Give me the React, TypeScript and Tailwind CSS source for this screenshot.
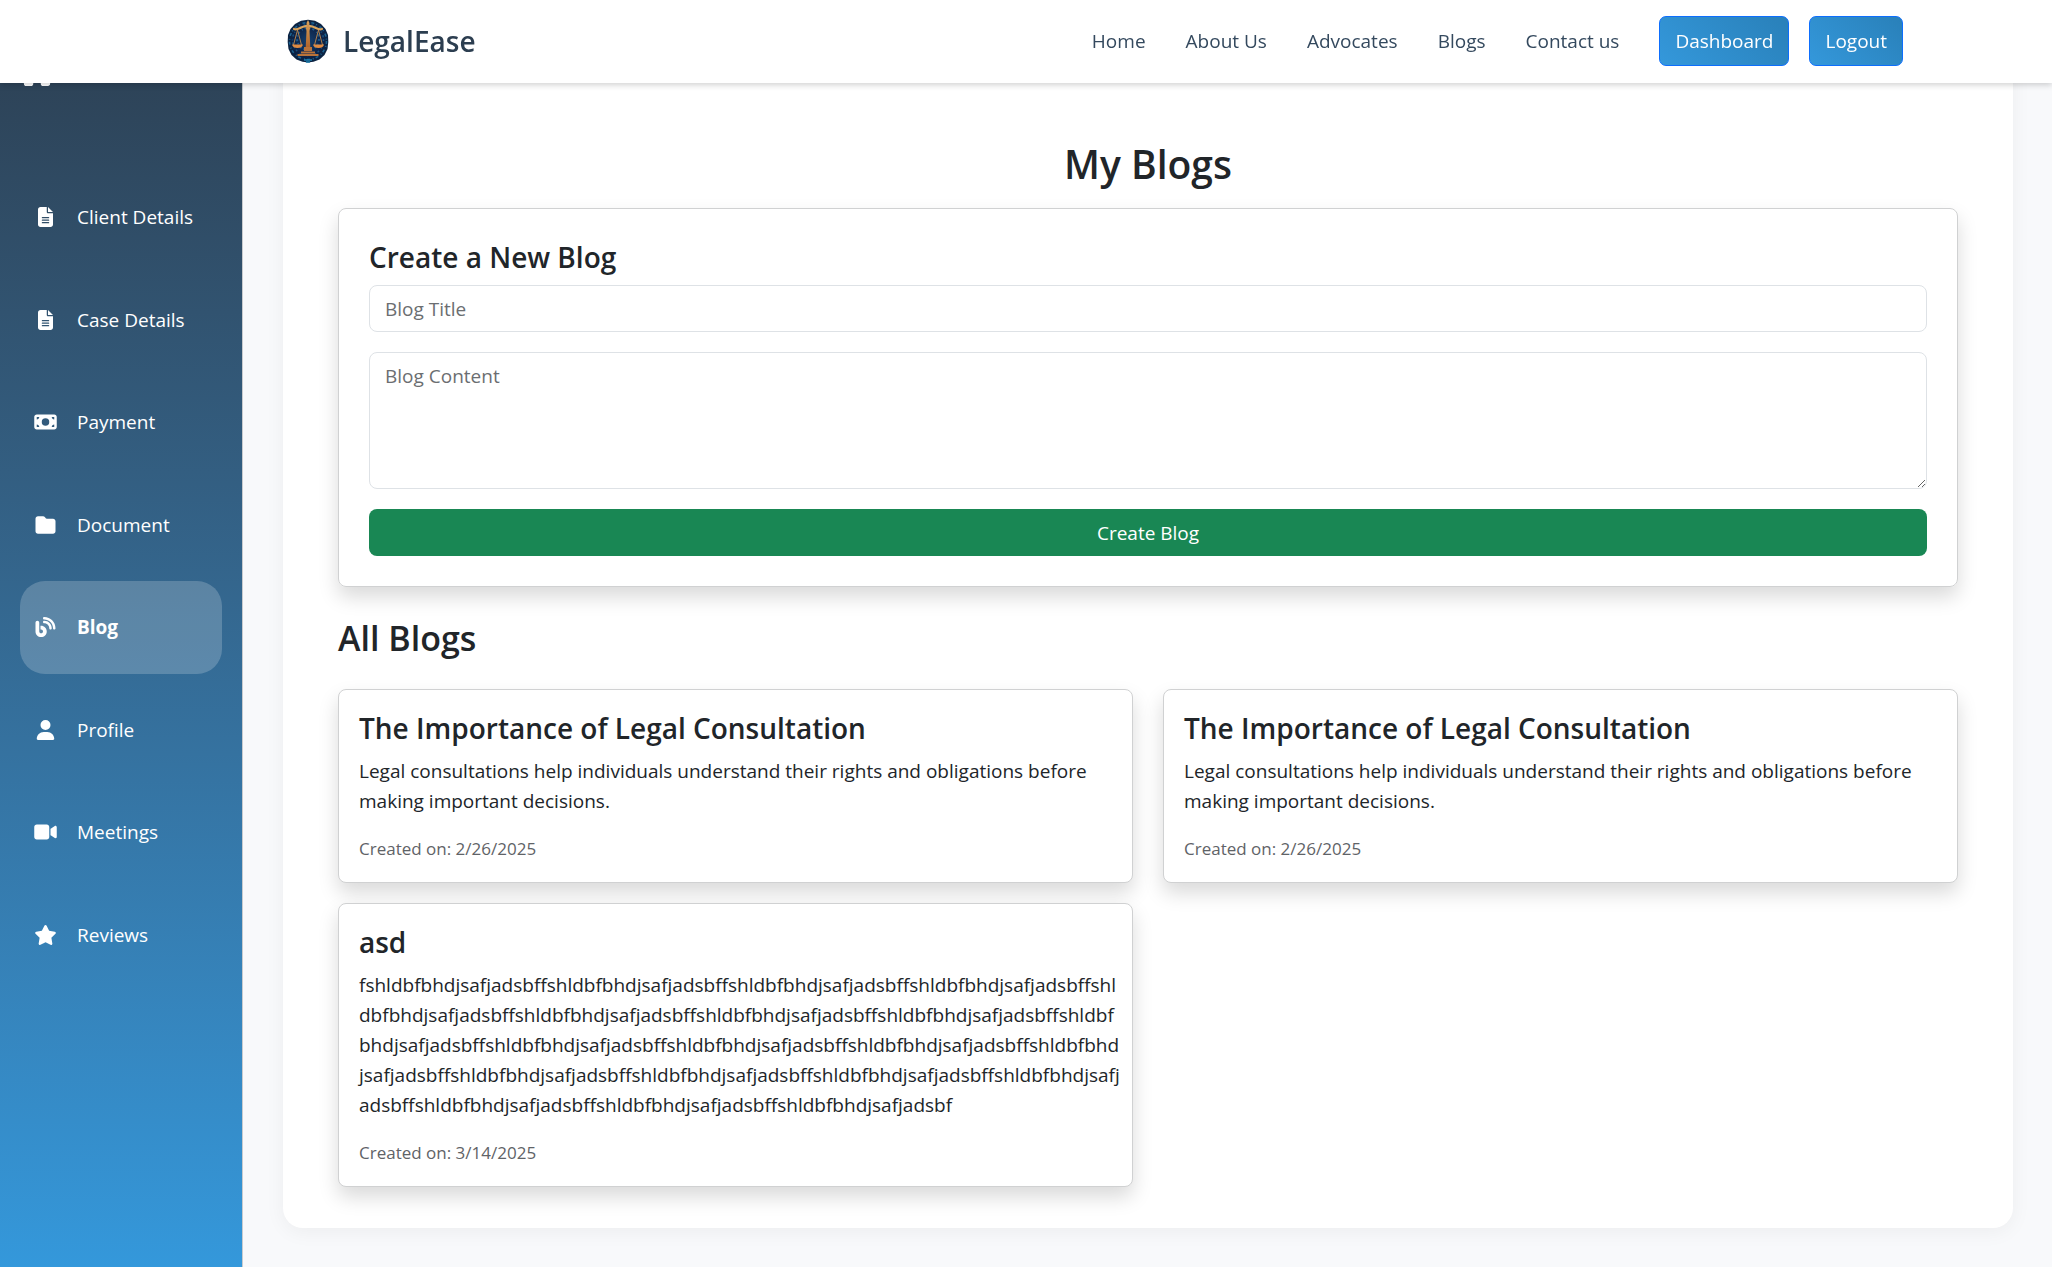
import type { ReactNode } from "react";
import {
  FaBlog,
  FaFileLines,
  FaFolder,
  FaHouse,
  FaMoneyBill,
  FaStar,
  FaUser,
  FaVideo,
} from "react-icons/fa6";

const navLinks = ["Home", "About Us", "Advocates", "Blogs", "Contact us"];

const menu = [
  { label: "Client Details", Icon: FaFileLines },
  { label: "Case Details", Icon: FaFileLines },
  { label: "Payment", Icon: FaMoneyBill },
  { label: "Document", Icon: FaFolder },
  { label: "Blog", Icon: FaBlog, active: true },
  { label: "Profile", Icon: FaUser },
  { label: "Meetings", Icon: FaVideo },
  { label: "Reviews", Icon: FaStar },
];

const consultation = {
  title: "The Importance of Legal Consultation",
  lines: [
    "Legal consultations help individuals understand their rights and obligations before",
    "making important decisions.",
  ],
  date: "2/26/2025",
};

const blogs = [
  consultation,
  consultation,
  {
    title: "asd",
    lines: [
      "fshldbfbhdjsafjadsbffshldbfbhdjsafjadsbffshldbfbhdjsafjadsbffshldbfbhdjsafjadsbffshl",
      "dbfbhdjsafjadsbffshldbfbhdjsafjadsbffshldbfbhdjsafjadsbffshldbfbhdjsafjadsbffshldbf",
      "bhdjsafjadsbffshldbfbhdjsafjadsbffshldbfbhdjsafjadsbffshldbfbhdjsafjadsbffshldbfbhd",
      "jsafjadsbffshldbfbhdjsafjadsbffshldbfbhdjsafjadsbffshldbfbhdjsafjadsbffshldbfbhdjsafj",
      "adsbffshldbfbhdjsafjadsbffshldbfbhdjsafjadsbffshldbfbhdjsafjadsbf",
    ],
    date: "3/14/2025",
  },
];

function Logo() {
  return (
    <svg viewBox="0 0 42 44" className="h-11 w-[42px]" aria-hidden="true">
      <defs>
        <radialGradient id="disc">
          <stop offset="0" stopColor="#14406f" />
          <stop offset="0.7" stopColor="#0e2246" />
          <stop offset="1" stopColor="#0b2342" />
        </radialGradient>
        <linearGradient id="gold" x1="0" y1="0" x2="0" y2="1">
          <stop offset="0" stopColor="#d9a25a" />
          <stop offset="1" stopColor="#b0642b" />
        </linearGradient>
      </defs>
      <path
        d="M21 .8 28 1.8 34 5l4.500 5L41 16l.3 7-.8 7-3 6-5 4.500-6 2.200L21 43.500l-5.500-.8-6-2.200-5-4.500-3-6L.7 23 1 16l2.500-6L8 5l6-3.200z"
        fill="url(#disc)"
      />
      <circle cx="21" cy="22" r="18.500" fill="none" stroke="#1b6291" strokeWidth="1.600" strokeDasharray="3 2 1 3" />
      <circle cx="21" cy="21" r="15.500" fill="none" stroke="#185180" strokeWidth="1.500" strokeDasharray="1 3 2 2" />
      <circle cx="21" cy="20" r="11" fill="none" stroke="#1c5a8c" strokeWidth="2" strokeDasharray="2 3 1 2" />
      <path d="M17 41h8M19 43h4" stroke="#1e7fae" strokeWidth="1.500" />
      <path
        d="M7 10c3.500 1.500 6.500-2 10-2.500 1.500-.2 3-.8 4-.8s2.500.6 4 .8c3.500.5 6.500 4 10 2.500"
        fill="none"
        stroke="#d9a35c"
        strokeWidth="2.200"
        strokeLinecap="round"
      />
      <path d="M10.500 11 6.500 26M10.500 11l4 15M31.500 11l-4 15M31.500 11l4 15" stroke="#c08a4e" strokeWidth=".9" />
      <path d="M21 1l1.500 3-.4 3 1 2-.6 3 .8 16.500h-4.600l.8-16.500-.6-3 1-2-.4-3z" fill="url(#gold)" />
      <path
        d="M5 25.500h11c-.5 2.500-2.500 3.500-5.500 3.500S5.500 28 5 25.500zM26 25.500h11c-.5 2.500-2.500 3.500-5.500 3.500S26.500 28 26 25.500z"
        fill="#e08a42"
      />
      <path d="M17 28h8v4h-8zM14 32.500h14v2H14zM10.500 35h21v2h-21z" fill="#b9733a" />
    </svg>
  );
}

function NavButton({ children }: { children: ReactNode }) {
  return (
    <button className="h-[50px] rounded-[7px] border border-[#0d6efd] bg-linear-[45deg,#3498db,#2980b9] px-[15px] text-[19px] font-medium text-white">
      {children}
    </button>
  );
}

export default function App() {
  return (
    <div className="flex min-h-screen bg-[#f8f9fb] font-['Open_Sans','Noto_Sans',sans-serif] text-[19px] leading-[30px] text-[#212529]">
      <header className="fixed inset-x-0 top-0 z-10 flex h-[83px] items-center justify-between bg-white pr-[149px] pb-0.5 pl-[287px] shadow-[0_2px_6px_rgba(0,0,0,0.18)]">
        <a href="#" className="flex items-center gap-3.5 text-[28px] font-semibold text-[#2c3e50]">
          <Logo />
          LegalEase
        </a>
        <div className="flex items-center gap-10">
          <nav className="flex gap-10 text-[#34495e]">
            {navLinks.map((label) => (
              <a key={label} href="#">
                {label}
              </a>
            ))}
          </nav>
          <div className="flex gap-5">
            <NavButton>Dashboard</NavButton>
            <NavButton>Logout</NavButton>
          </div>
        </div>
      </header>

      <aside className="w-[243px] shrink-0 border-r border-[#c8cbce] bg-linear-to-b from-[#2c3e50] to-[#3498db] px-5 pt-14 text-white">
        <button aria-label="Toggle menu" className="block">
          <FaHouse className="h-[30px] w-[34px]" />
        </button>
        <nav className="mt-[85px] grid h-[810px] auto-rows-fr gap-2.5">
          {menu.map(({ label, Icon, active }) => (
            <a
              key={label}
              href="#"
              className={
                active
                  ? "flex items-center gap-5 rounded-[25px] bg-white/20 px-3.5 font-bold"
                  : "flex items-center gap-5 rounded-[25px] px-3.5 font-medium"
              }
            >
              <Icon className="h-5 w-[23px] shrink-0" />
              {label}
            </a>
          ))}
        </nav>
      </aside>

      <main className="min-w-0 flex-1 pr-[39px] pb-[39px] pl-10">
        <div className="rounded-b-[20px] bg-white px-[55px] pt-[140px] pb-[41px] shadow-[0_4px_20px_rgba(0,0,0,0.05)]">
          <h1 className="mb-5 text-center text-[39px] leading-[48px] font-semibold">My Blogs</h1>

          <form className="flex flex-col gap-5 rounded-lg border border-[#d0d1d2] p-[30px] shadow-[0_10px_20px_rgba(0,0,0,0.15)]">
            <h2 className="-mb-2.5 text-[28px] leading-9 font-semibold">Create a New Blog</h2>
            <input
              type="text"
              aria-label="Blog Title"
              placeholder="Blog Title"
              className="h-[47px] rounded-lg border border-[#dee2e6] px-[15px] placeholder:text-[#6b6e71]"
            />
            <textarea
              aria-label="Blog Content"
              placeholder="Blog Content"
              className="h-[137px] resize-y rounded-lg border border-[#dee2e6] px-[15px] py-2 placeholder:text-[#6b6e71]"
            />
            <button type="button" className="h-[47px] rounded-lg bg-[#198754] text-white">
              Create Blog
            </button>
          </form>

          <h2 className="my-[30px] text-[34px] leading-[42px] font-semibold">All Blogs</h2>

          <div className="grid grid-cols-2 items-start gap-x-[30px] gap-y-5">
            {blogs.map((blog, i) => (
              <article
                key={i}
                className="rounded-lg border border-[#d0d1d2] bg-white p-5 shadow-[0_10px_20px_rgba(0,0,0,0.15)]"
              >
                <h3 className="text-[28px] leading-9 font-semibold">{blog.title}</h3>
                <p className="mt-2.5 whitespace-pre">{blog.lines.join("\n")}</p>
                <p className="mt-5 text-[17px] leading-[26px] text-[#5f6367]">Created on: {blog.date}</p>
              </article>
            ))}
          </div>
        </div>
      </main>
    </div>
  );
}
